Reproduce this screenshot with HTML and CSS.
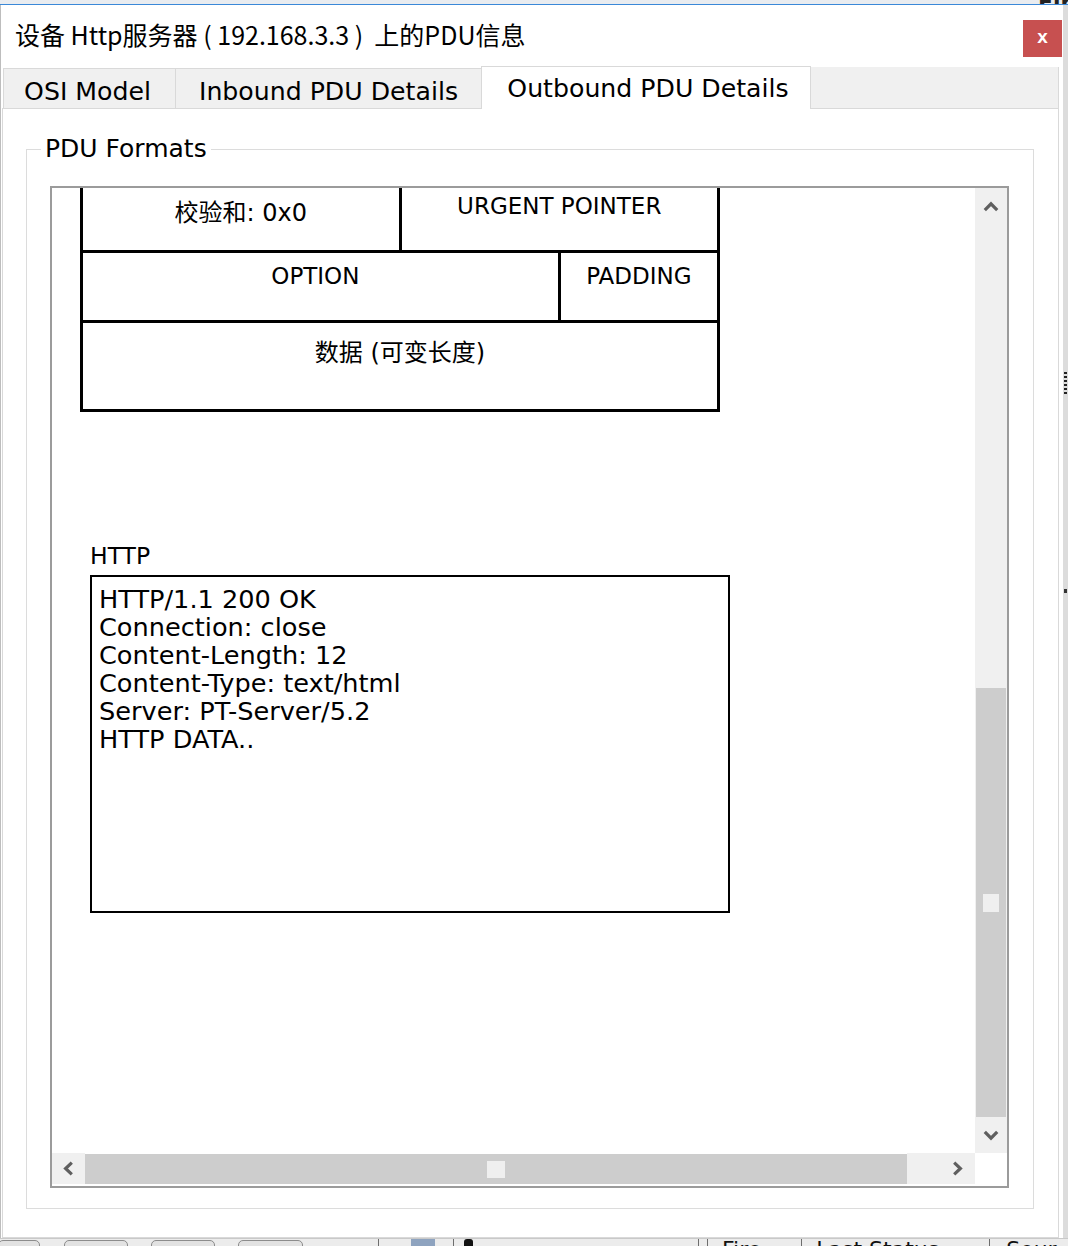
FILE: index.html
```html
<!DOCTYPE html>
<html lang="zh-CN">
<head>
<meta charset="utf-8">
<title>PDU信息</title>
<link rel="stylesheet" href="styles.css">
</head>
<body>
<div class="topstrip"><span class="ts-line"></span><span class="ts-line"></span><span class="ts-text">Fire</span></div>
<div class="main">
  <div class="window">
    <div class="titlebar">
      <span class="title">设备 Http服务器 ( 192.168.3.3 )  上的PDU信息</span>
      <button class="close">x</button>
    </div>
    <div class="tabs">
      <div class="tab tab-osi">OSI Model</div>
      <div class="tab tab-in">Inbound PDU Details</div>
      <div class="tab tab-out">Outbound PDU Details</div>
      <div class="tab-fill"></div>
    </div>
    <div class="pane">
      <fieldset class="group">
        <legend>PDU Formats</legend>
        <div class="scroller">
          <div class="viewport">
            <div class="content">
              <div class="pdu">
                <div class="cell c-half c-cjk">校验和: 0x0</div>
                <div class="cell c-half c-latin">URGENT POINTER</div>
                <div class="cell c-three c-latin c-option">OPTION</div>
                <div class="cell c-latin">PADDING</div>
                <div class="cell c-full c-cjk">数据 (可变长度)</div>
              </div>
              <div class="http-label">HTTP</div>
              <div class="http-box">
                <div>HTTP/1.1 200 OK</div>
                <div>Connection: close</div>
                <div>Content-Length: 12</div>
                <div>Content-Type: text/html</div>
                <div>Server: PT-Server/5.2</div>
                <div>HTTP DATA..</div>
              </div>
            </div>
          </div>
          <div class="vbar">
            <div class="sb-btn"><svg width="16" height="11" viewBox="0 0 16 11"><polyline points="1.8,9.2 8,2.8 14.2,9.2" /></svg></div>
            <div class="v-track"></div>
            <div class="v-thumb"><span class="grip grip-v"></span></div>
            <div class="sb-btn"><svg width="16" height="11" viewBox="0 0 16 11"><polyline points="1.8,1.8 8,8.2 14.2,1.8" /></svg></div>
          </div>
          <div class="hbar">
            <div class="sb-btn sb-left"><svg width="11" height="15" viewBox="0 0 11 15"><polyline points="8.8,1.6 2.6,7.5 8.8,13.4" /></svg></div>
            <div class="h-thumb"><span class="grip grip-h"></span></div>
            <div class="h-track"></div>
            <div class="sb-btn sb-right"><svg width="11" height="15" viewBox="0 0 11 15"><polyline points="2.2,1.6 8.4,7.5 2.2,13.4" /></svg></div>
          </div>
          <div class="corner"></div>
        </div>
      </fieldset>
    </div>
  </div>
  <div class="side"><span class="mark mark-a"></span><span class="mark mark-b"></span></div>
</div>
<div class="bottom">
  <span class="bb bb1"></span>
  <span class="bb bb2"></span>
  <span class="bb bb3"></span>
  <span class="bb bb4"></span>
  <span class="vsep vs1"></span>
  <span class="bicon"></span>
  <span class="vsep vs2"></span>
  <span class="bdot"></span>
  <span class="vsep vs3"></span>
  <span class="vsep vs4"></span>
  <span class="btext bt1">Fire</span>
  <span class="vsep vs5"></span>
  <span class="btext bt2">Last Status</span>
  <span class="vsep vs6"></span>
  <span class="btext bt3">Sour</span>
</div>
</body>
</html>
```

FILE: styles.css
```css
* { box-sizing: border-box; }
html, body { margin: 0; padding: 0; }
body {
  width: 1068px;
  height: 1246px;
  overflow: hidden;
  background: #e6e6e6;
  font-family: "DejaVu Sans", "Noto Sans CJK SC", sans-serif;
  color: #000;
}

/* background app strip at top */
.topstrip {
  height: 5px;
  background: #e9ecf0;
  border-bottom: 1px solid #3a88d8;
  display: flex;
  align-items: flex-start;
  overflow: hidden;
}
.ts-line { width: 1px; height: 4px; background: #a9a9a9; }
.ts-line:first-child { margin-left: 1012px; }
.ts-line + .ts-line { margin-left: 4px; }
.ts-text { margin-left: 22px; font-size: 22px; line-height: 6px; font-weight: bold; color: #222; }

.main { display: flex; height: 1233px; }

.window {
  width: 1063px;
  background: #fff;
  border-left: 1px solid #bdbdbd;
  display: flex;
  flex-direction: column;
}
.side { flex: 1; background: #dcdcdc; display: flex; flex-direction: column; }
.mark { display: block; width: 3px; background: #333; margin-left: 1px; }
.mark-a { height: 24px; margin-top: 367px; background: repeating-linear-gradient(#222 0 2px, #ddd 2px 4px); }
.mark-b { height: 4px; margin-top: 193px; }

/* title bar */
.titlebar {
  height: 61px;
  display: flex;
  justify-content: space-between;
  align-items: flex-start;
  padding-left: 14px;
}
.title {
  font-family: "Noto Sans CJK SC", sans-serif;
  font-size: 25px;
  line-height: 30px;
  margin-top: 14px;
  color: #000;
  white-space: pre;
}
.close {
  margin-top: 15px;
  margin-right: 1px;
  width: 39px;
  height: 37px;
  border: none;
  padding: 0 0 3px 0;
  background: #c75050;
  color: #fff;
  font-family: "Liberation Sans", sans-serif;
  font-weight: bold;
  font-size: 19px;
  line-height: 20px;
}

/* tabs */
.tabs {
  display: flex;
  align-items: flex-end;
  height: 42px;
  padding: 0 4px 0 2px;
}
.tab {
  height: 40px;
  border: 1px solid #d9d9d9;
  border-bottom: none;
  background: #f0f0f0;
  font-size: 25.2px;
  line-height: 30px;
  padding-top: 8px;
  text-align: center;
  white-space: nowrap;
  color: #000;
}
.tab + .tab { margin-left: -1px; }
.tab-osi { width: 173px; padding-right: 4px; }
.tab-in { width: 307px; }
.tab-out {
  width: 330px;
  height: 43px;
  background: #fff;
  padding-top: 7px;
  padding-left: 4px;
  margin-bottom: -1px;
  position: relative;
  z-index: 1;
}
.tab-fill {
  flex: 1;
  height: 41px;
  margin-left: -1px;
  background: #f0f0f0;
  border-right: 1px solid #d9d9d9;
}

/* pane */
.pane {
  flex: 1;
  margin: 0 4px 0 1px;
  border: 1px solid #d9d9d9;
  padding: 25px 24px 28px 23px;
  background: #fff;
}
.group {
  margin: 0;
  border: 1px solid #dcdcdc;
  padding: 22px 24px 20px 14px;
  min-width: 0;
}
.group legend {
  padding: 0 4px;
  font-size: 25px;
  line-height: 30px;
  color: #000;
}

/* scroll area */
.scroller {
  margin-left: 9px;
  width: 959px;
  height: 1002px;
  border: 2px solid #9b9b9b;
  display: grid;
  grid-template-columns: 923px 32px;
  grid-template-rows: 965px 33px;
  background: #fff;
}
.viewport { overflow: hidden; }
.content { margin-top: -8px; padding-left: 28px; }

.pdu {
  width: 640px;
  border: 3px solid #000;
  background: #000;
  display: grid;
  grid-template-columns: repeat(4, 1fr);
  grid-template-rows: 67px 67px 86px;
  gap: 3px;
}
.cell { background: #fff; text-align: center; white-space: nowrap; }
.c-half { grid-column: span 2; }
.c-three { grid-column: span 3; }
.c-full { grid-column: span 4; }
.c-latin { font-size: 23px; line-height: 26px; padding-top: 10px; }
.c-option { padding-right: 10px; }
.c-cjk { font-size: 24px; line-height: 30px; padding-top: 15px; }

.http-label {
  margin: 130px 0 0 10px;
  font-size: 23.5px;
  line-height: 28px;
}
.http-box {
  margin: 5px 0 0 10px;
  width: 640px;
  height: 338px;
  border: 2px solid #000;
  padding: 8px 7px;
  font-size: 25.6px;
  line-height: 28px;
  white-space: nowrap;
}

/* scrollbars */
.sb-btn {
  display: flex;
  align-items: center;
  justify-content: center;
  flex: none;
  background: #f0f0f0;
}
.sb-btn svg polyline {
  fill: none;
  stroke: #5f5f5f;
  stroke-width: 3.2;
  stroke-linecap: butt;
  stroke-linejoin: miter;
}
.vbar { display: flex; flex-direction: column; background: #f0f0f0; }
.vbar .sb-btn { height: 36px; }
.v-track { height: 464px; flex: none; }
.v-thumb {
  height: 429px;
  flex: none;
  margin: 0 1px;
  background: #cdcdcd;
  display: flex;
  align-items: center;
  justify-content: center;
}
.grip { display: block; background: #efefef; }
.grip-v { width: 16px; height: 18px; }

.hbar { display: flex; background: #fff; padding-bottom: 2px; }
.hbar .sb-left { width: 33px; }
.hbar .sb-right { width: 35px; }
.h-thumb {
  width: 822px;
  flex: none;
  margin-top: 1px;
  background: #cdcdcd;
  display: flex;
  align-items: center;
  justify-content: center;
}
.grip-h { width: 18px; height: 17px; }
.h-track { width: 33px; flex: none; background: #f0f0f0; }
.corner { background: #fff; }

/* background app strip at the bottom */
.bottom {
  height: 8px;
  overflow: hidden;
  background: #ececec;
  border-top: 1px solid #c9c9c9;
  display: flex;
  align-items: flex-start;
}
.bb {
  flex: none;
  height: 20px;
  margin-top: 1px;
  border: 1px solid #8c8c8c;
  border-radius: 5px;
  background: #e2e2e2;
}
.bb1 { width: 42px; margin-left: -2px; }
.bb2 { width: 64px; margin-left: 24px; }
.bb3 { width: 64px; margin-left: 23px; }
.bb4 { width: 65px; margin-left: 23px; }
.vsep { flex: none; width: 1px; height: 8px; background: #6d6d6d; }
.vs1 { margin-left: 75px; }
.bicon { flex: none; width: 24px; height: 8px; margin-left: 32px; background: #8ea3bf; }
.vs2 { margin-left: 18px; }
.bdot { flex: none; width: 9px; height: 8px; margin-left: 10px; background: #111; border-radius: 3px 3px 0 0; }
.vs3 { margin-left: 225px; }
.vs4 { margin-left: 8px; }
.btext {
  flex: none;
  font-size: 22px;
  line-height: 22px;
  color: #111;
  white-space: nowrap;
}
.bt1 { margin-left: 14px; }
.vs5 { margin-left: 40px; }
.bt2 { margin-left: 14px; }
.vs6 { margin-left: 50px; }
.bt3 { margin-left: 16px; }
```
